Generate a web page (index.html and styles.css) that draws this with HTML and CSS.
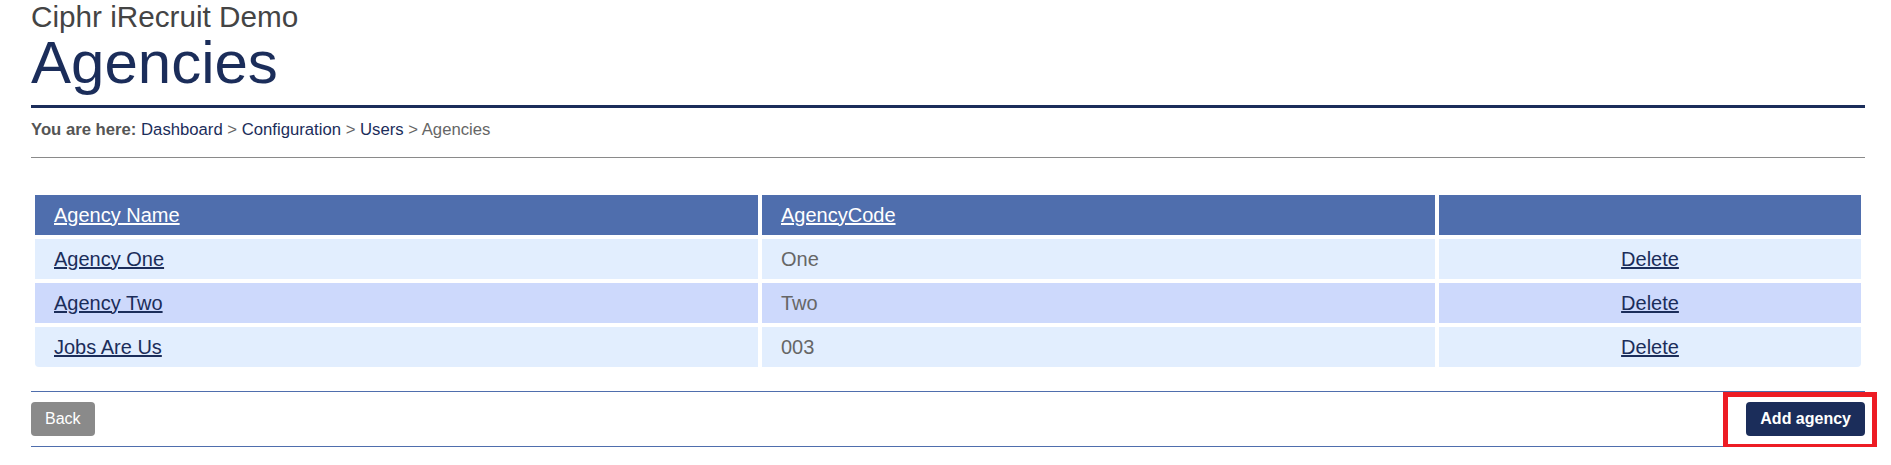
FILE: index.html
```html
<!DOCTYPE html>
<html lang="en">
<head>
<meta charset="utf-8">
<title>Agencies - Ciphr iRecruit Demo</title>
<link rel="stylesheet" href="styles.css">
</head>
<body>
<div class="page">
  <header class="page-header">
    <div class="site-name">Ciphr iRecruit Demo</div>
    <h1 class="page-title">Agencies</h1>
  </header>
  <nav class="breadcrumb">
    <strong class="crumb-label">You are here:</strong>
    <a href="#">Dashboard</a> <span class="sep">&gt;</span>
    <a href="#">Configuration</a> <span class="sep">&gt;</span>
    <a href="#">Users</a> <span class="sep">&gt;</span>
    <span class="current">Agencies</span>
  </nav>

  <table class="grid">
    <colgroup>
      <col class="c-name">
      <col class="c-code">
      <col class="c-action">
    </colgroup>
    <thead>
      <tr>
        <th><a href="#">Agency Name</a></th>
        <th><a href="#">AgencyCode</a></th>
        <th></th>
      </tr>
    </thead>
    <tbody>
      <tr class="odd">
        <td><a href="#">Agency One</a></td>
        <td class="code">One</td>
        <td class="action"><a href="#">Delete</a></td>
      </tr>
      <tr class="even">
        <td><a href="#">Agency Two</a></td>
        <td class="code">Two</td>
        <td class="action"><a href="#">Delete</a></td>
      </tr>
      <tr class="odd">
        <td><a href="#">Jobs Are Us</a></td>
        <td class="code">003</td>
        <td class="action"><a href="#">Delete</a></td>
      </tr>
    </tbody>
  </table>

  <div class="actions">
    <button class="btn btn-back" type="button">Back</button>
    <span class="highlight">
      <button class="btn btn-primary" type="button">Add agency</button>
    </span>
  </div>
</div>
</body>
</html>
```

FILE: styles.css
```css
html, body {
  margin: 0;
  padding: 0;
  background: #ffffff;
}

body {
  font-family: "Liberation Sans", Arial, Helvetica, sans-serif;
  color: #444444;
}

.page {
  padding: 0 26px 0 31px;
}

.page-header {
  border-bottom: 3px solid #1b2d5a;
  padding-bottom: 12px;
}

.site-name {
  font-size: 29.7px;
  line-height: 33px;
  color: #444444;
}

.page-title {
  margin: 0;
  font-size: 60px;
  line-height: 60px;
  font-weight: normal;
  color: #1b2d5a;
}

.breadcrumb {
  font-size: 16.7px;
  line-height: 20px;
  padding: 12px 0 17px;
  border-bottom: 1px solid #8a8a8a;
  color: #555555;
}

.crumb-label {
  color: #555555;
}

.breadcrumb a {
  color: #1b2d5a;
  text-decoration: none;
}

.breadcrumb .sep,
.breadcrumb .current {
  color: #666666;
}

.grid {
  margin-top: 33px;
  width: 1834px;
  table-layout: fixed;
  border-collapse: separate;
  border-spacing: 4px;
  font-size: 20px;
}

.c-name { width: 723px; }
.c-code { width: 673px; }
.c-action { width: 422px; }

.grid th,
.grid td {
  height: 40px;
  padding: 0 19px;
  text-align: left;
  vertical-align: middle;
  font-weight: normal;
  box-sizing: border-box;
}

.grid th {
  background: #4f6ead;
}

.grid th a {
  color: #ffffff;
}

.grid td a {
  color: #1b2d5a;
}

.grid tr.odd td {
  background: #e2eefe;
}

.grid tr.even td {
  background: #cdd9fc;
}

.grid td.code {
  color: #666666;
}

.grid td.action {
  text-align: center;
}

.grid tbody tr:last-child td:first-child {
  border-bottom-left-radius: 4px;
}

.grid tbody tr:last-child td:last-child {
  border-bottom-right-radius: 4px;
}

.actions {
  margin-top: 20px;
  border-top: 1px solid #4f6ead;
  border-bottom: 1px solid #4f6ead;
  padding: 10px 0;
  display: flex;
  justify-content: space-between;
  align-items: center;
}

.btn {
  font-family: "Liberation Sans", Arial, Helvetica, sans-serif;
  font-size: 16px;
  line-height: 18px;
  padding: 8px 14px;
  border: none;
  border-radius: 4px;
  color: #ffffff;
  cursor: pointer;
  display: block;
}

.btn-back {
  background: #8a8a8a;
  font-size: 16px;
  padding: 8px 14px;
}

.btn-primary {
  background: #1b2d5a;
  font-weight: bold;
}

.highlight {
  position: relative;
  display: block;
}

.highlight::after {
  content: "";
  position: absolute;
  left: -23px;
  right: -12px;
  top: -10px;
  bottom: -13px;
  border: 5px solid #ed1c24;
  pointer-events: none;
}
```
